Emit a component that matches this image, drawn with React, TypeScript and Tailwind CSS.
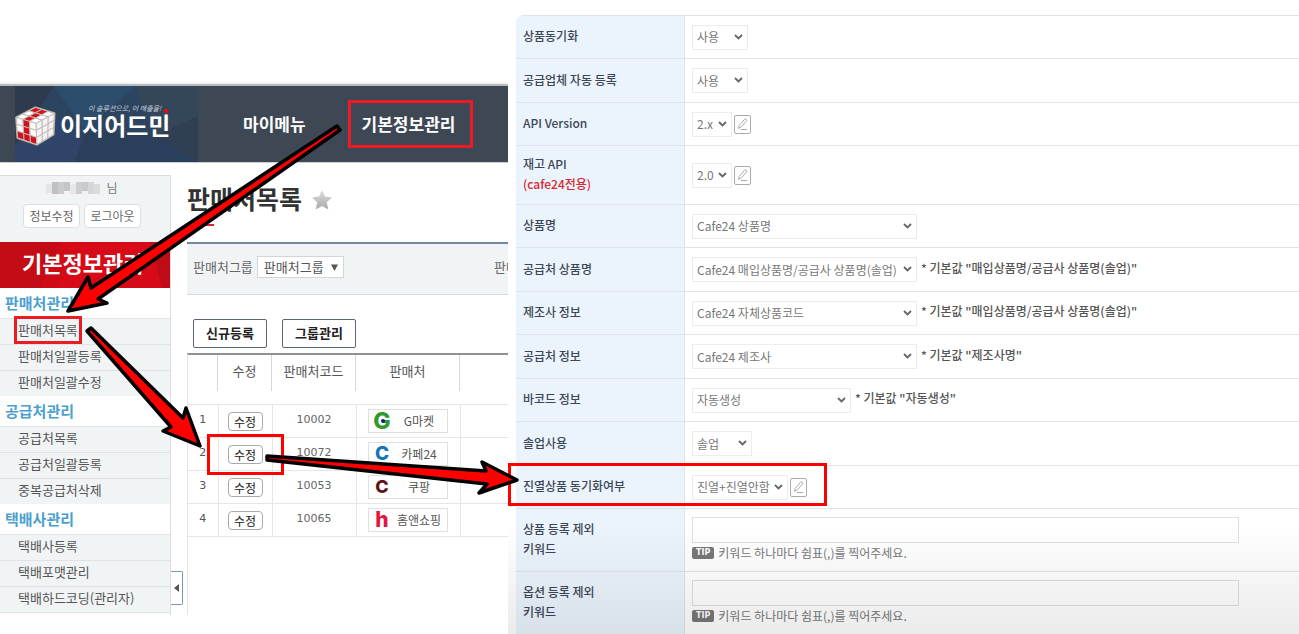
import type { ReactNode } from "react";

const MENU = [
  { title: "판매처관리", items: ["판매처목록", "판매처일괄등록", "판매처일괄수정"] },
  { title: "공급처관리", items: ["공급처목록", "공급처일괄등록", "중복공급처삭제"] },
  { title: "택배사관리", items: ["택배사등록", "택배포맷관리", "택배하드코딩(관리자)"] },
];

const SELLERS = [
  { no: 1, code: "10002", name: "G마켓", mark: "G", markClass: "text-[23px] text-[#2f9a2f]" },
  { no: 2, code: "10072", name: "카페24", mark: "C", markClass: "text-[19px] text-[#1475bd]" },
  { no: 3, code: "10053", name: "쿠팡", mark: "C", markClass: "text-[18px] text-[#5c1416]" },
  { no: 4, code: "10065", name: "홈앤쇼핑", mark: "h", markClass: "text-[21px] text-[#e3173e]" },
];

type Point = [number, number];

const lerp = (a: Point, b: Point, t: number): Point => [a[0] + (b[0] - a[0]) * t, a[1] + (b[1] - a[1]) * t];

// one 3x3 side of the cube, corners given clockwise from the top left
const CubeFace = ({ corners, red, base }: { corners: Point[]; red: string[]; base: string }) => {
  const [a, b, c, d] = corners;
  const at = (u: number, v: number) => lerp(lerp(a, b, u), lerp(d, c, u), v).join(",");
  return (
    <>
      {[0, 1, 2].map((row) =>
        [0, 1, 2].map((col) => (
          <polygon
            key={`${row}${col}`}
            points={[
              at(col / 3, row / 3),
              at((col + 1) / 3, row / 3),
              at((col + 1) / 3, (row + 1) / 3),
              at(col / 3, (row + 1) / 3),
            ].join(" ")}
            fill={red.includes(`${row}${col}`) ? "#d3111d" : base}
            stroke="#c3bab6"
            strokeWidth="3"
          />
        )),
      )}
    </>
  );
};

const Cube = () => (
  <svg viewBox="16 26 124 120" className="h-10 w-[41px] shrink-0" aria-hidden="true">
    <polygon
      points="20,60 78,30 135,48 132,112 82,142 24,122"
      fill="#b9aea9"
      stroke="#b9aea9"
      strokeWidth="7"
      strokeLinejoin="round"
    />
    <CubeFace corners={[[20, 60], [78, 30], [135, 48], [80, 78]]} red={["10", "11", "12", "02"]} base="#ffffff" />
    <CubeFace corners={[[20, 60], [80, 78], [82, 142], [24, 122]]} red={["01", "11", "20", "21", "22"]} base="#fbfbfb" />
    <CubeFace corners={[[80, 78], [135, 48], [132, 112], [82, 142]]} red={[]} base="#f4f2f2" />
  </svg>
);

const TopBar = () => (
  <header className="border-t-2 border-[#f3f3f3]">
    <div className="flex h-[79px] border-b border-t-2 border-b-[#c9cdd2] border-t-[#b9babb] bg-[#3e4855] pl-[15px]">
      <div className="relative flex w-[183px] shrink-0 items-center gap-1 overflow-hidden pt-1">
        <svg viewBox="0 0 183 76" preserveAspectRatio="none" className="absolute inset-0 h-full w-full" aria-hidden="true">
          <rect width="183" height="76" fill="#2c4460" />
          <polygon points="0,0 39,0 0,60" fill="#2e3b4e" />
          <polygon points="39,0 120,0 70,45" fill="#2b4d6b" />
          <polygon points="0,60 30,20 90,76 0,76" fill="#2f4468" />
          <polygon points="120,0 183,0 183,40 140,50" fill="#33465a" />
          <polygon points="70,45 140,50 183,76 60,76" fill="#2a3f5c" />
          <polygon points="140,50 183,30 183,76" fill="#303f53" />
        </svg>
        <div className="relative">
          <Cube />
        </div>
        <div className="relative flex flex-col pb-3 text-white">
          <span className="pl-7 text-[7px] leading-[10px] text-[#c6d0da] italic">이 솔루션으로, 이 매출을!</span>
          <strong className="text-2xl leading-6 font-bold whitespace-nowrap">이지어드민</strong>
          <span className="absolute top-1.5 right-0.5 size-1 rotate-45 bg-[#e0101c]" />
        </div>
      </div>
      <nav className="flex items-center pl-[30px] text-[17px] font-bold text-white">
        <a href="#my" className="w-[120px] shrink-0 pl-[15px]">마이메뉴</a>
        <a href="#basic" className="flex h-12 w-[125px] shrink-0 items-center justify-center border-[3px] border-[#ed1c24] pr-1">
          기본정보관리
        </a>
      </nav>
    </div>
  </header>
);

const MOSAIC = ["#e3e6e7", "#bfc2c4", "#c9cbcd", "#c3c5c8", "#e6e9ea", "#cdd0d2", "#c8cacc", "#d5d6d8", "#d9dbdc"];

const Sidebar = () => (
  <aside className="w-[171px] shrink-0 border-t border-r border-[#d8dcdf] pb-0.5">
    <div className="flex h-[66px] flex-col items-center gap-2 bg-[#f1f4f5] pr-1.5 pt-1">
      <p className="flex items-center gap-1.5 text-xs text-[#777]">
        <svg viewBox="0 0 54 12" className="h-3 w-[54px]" aria-hidden="true">
          {MOSAIC.map((color, i) => (
            <rect key={i} x={i * 6} y={i % 4 === 0 ? 2 : 0} width="6" height={i % 3 === 0 ? 9 : 12} fill={color} />
          ))}
        </svg>
        님
      </p>
      <div className="flex gap-1 text-xs text-[#666]">
        <button className="h-6 w-[57px] rounded-sm border border-[#dcdfe1] bg-white">정보수정</button>
        <button className="h-6 w-[57px] rounded-sm border border-[#dcdfe1] bg-white">로그아웃</button>
      </div>
    </div>
    <h2 className="relative h-[46px] bg-[#d70a17] pl-[22px] text-[22px] leading-10 font-bold text-white">
      <svg viewBox="0 0 170 46" preserveAspectRatio="none" className="absolute inset-0 h-full w-full" aria-hidden="true">
        <polygon points="0,0 60,0 40,46 0,46" fill="#c40c16" />
        <polygon points="60,0 78,18 54,46 40,46" fill="#cf0b16" />
        <polygon points="150,0 170,0 170,46 162,46" fill="#c00c16" />
      </svg>
      <span className="relative">기본정보관리</span>
    </h2>
    <nav>
      {MENU.map((group) => (
        <section key={group.title}>
          <h3 className="h-[30px] pl-[5px] text-[15px] leading-[30px] font-bold text-[#4b9fd0]">{group.title}</h3>
          <ul className="text-[13px] text-[#555]">
            {group.items.map((item) => (
              <li key={item} className="flex h-[26px] items-center border-t border-[#dfe3e5] bg-[#f1f4f5] pb-[3px] pl-[14px]">
                {item === "판매처목록" ? (
                  <a href="#list" className="-my-1 border-[3px] border-[#ed1c24] px-px leading-[22px]">
                    {item}
                  </a>
                ) : (
                  <a href="#menu" className="pl-1">{item}</a>
                )}
              </li>
            ))}
          </ul>
        </section>
      ))}
      <div className="border-t border-[#dfe3e5]" />
    </nav>
  </aside>
);

const SellerList = () => (
  <main className="flex min-w-0 flex-1 flex-col pt-2">
    <div className="flex items-center gap-2.5">
      <h1 className="text-[25px] leading-[30px] font-bold text-[#333]">판매처목록</h1>
      <svg viewBox="0 0 20 20" className="mt-1 size-5" aria-hidden="true">
        <defs>
          <linearGradient id="star" x2="0" y2="1">
            <stop offset="0" stopColor="#dedede" />
            <stop offset="1" stopColor="#a9a9a9" />
          </linearGradient>
        </defs>
        <path d="M10 0l3 6.600 7 .8-5.200 4.900 1.500 7.100L10 16l-6.300 3.400 1.500-7.100L0 7.400l7-.8z" fill="url(#star)" />
      </svg>
    </div>
    <div className="mt-[11px] h-0.5 w-[27px] bg-[#e02034]" />
    <div className="mt-4 flex h-[53px] items-center gap-1 overflow-hidden border-t-2 border-b border-t-[#7188a5] border-b-[#d5d9dc] bg-[#f1f4f5] pb-1 pl-1.5 text-[13px] text-[#666]">
      <label htmlFor="group" className="shrink-0">판매처그룹</label>
      <span className="relative">
        <select id="group" className="block h-[22px] w-[87px] appearance-none border border-[#d5d5d5] bg-white pl-1.5 text-[13px] leading-5 text-[#555]">
          <option>판매처그룹</option>
        </select>
        <svg viewBox="0 0 7 7" className="pointer-events-none absolute top-2 right-1.5 size-[7px]" aria-hidden="true">
          <path d="M0 .5h7L3.500 7z" fill="#555" />
        </svg>
      </span>
      <span className="ml-auto w-3.5 shrink-0 overflow-hidden whitespace-nowrap">판매</span>
    </div>
    <div className="mt-6 mb-[5px] flex gap-[15px] pl-1.5 text-[13px] font-bold text-[#222]">
      <button className="h-[29px] w-[74px] rounded-xs border border-[#5d6678] bg-white pb-0.5">신규등록</button>
      <button className="h-[29px] w-[74px] rounded-xs border border-[#5d6678] bg-white pb-0.5">그룹관리</button>
    </div>
    <div className="flex-1 border-t-2 border-l border-t-[#8f9191] border-l-[#e4e4e4]">
      <table className="w-full table-fixed border-collapse text-[13px] text-[#555]">
        <colgroup>
          <col className="w-[30px]" />
          <col className="w-[54px]" />
          <col className="w-[84px]" />
          <col className="w-[104px]" />
          <col />
        </colgroup>
        <thead>
          <tr className="h-[49px] align-top">
            {["", "수정", "판매처코드", "판매처"].map((head) => (
              <th key={head} className="p-0 font-normal">
                <div className="h-9 border-r border-[#d6d6d6] leading-8">{head}</div>
              </th>
            ))}
            <th className="p-0" />
          </tr>
        </thead>
        <tbody>
          {SELLERS.map((seller) => (
            <tr key={seller.no} className="h-[33px] border-y border-[#e6e6e6] text-center">
              <td className="border-r border-[#e6e6e6] p-0 font-['DejaVu_Sans',sans-serif] text-[11px]">{seller.no}</td>
              <td className="border-r border-[#e6e6e6] p-0">
                <button className="h-[19px] w-[35px] rounded-sm border border-[#aaa] bg-white align-middle text-xs leading-[17px] text-[#222]">
                  수정
                </button>
              </td>
              <td className="border-r border-[#e6e6e6] p-0 font-['DejaVu_Sans',sans-serif] text-[11px] text-[#666]">
                {seller.code}
              </td>
              <td className="border-r border-[#e6e6e6] p-0">
                <div className="mx-auto flex h-6 w-20 items-center border border-[#e0e0e0] bg-white text-xs">
                  <span className={`relative w-[26px] shrink-0 font-[Inter,sans-serif] leading-5 font-extrabold ${seller.markClass}`}>
                    {seller.mark}
                    {seller.no === 1 && <i className="absolute top-2 left-3 size-1 rounded-full bg-[#16206b]" />}
                  </span>
                  <span className="flex-1 pr-1 whitespace-nowrap">{seller.name}</span>
                </div>
              </td>
              <td className="p-0" />
            </tr>
          ))}
        </tbody>
      </table>
    </div>
  </main>
);

const Choice = ({ id, value, width }: { id: string; value: string; width: string }) => (
  <span className={`relative shrink-0 ${width}`}>
    <select id={id} className="block h-[25px] w-full appearance-none border border-[#ececee] bg-transparent pl-1 text-xs text-[#777]">
      <option>{value}</option>
    </select>
    <svg viewBox="0 0 9 6" className="pointer-events-none absolute top-[9px] right-[5px] h-1.5 w-[9px]" aria-hidden="true">
      <path d="M1 1l3.500 3.500L8 1" fill="none" stroke="#666" strokeWidth="1.800" />
    </svg>
  </span>
);

const EditButton = () => (
  <button aria-label="편집" className="flex h-[19px] w-[17px] shrink-0 items-center justify-center rounded-xs border border-[#aaa]">
    <svg viewBox="0 0 13 14" className="h-3.5 w-[13px]" fill="none" stroke="#aaa" aria-hidden="true">
      <path d="M2.500 11.500l.7-3L9 1.700l2 1.600-5.300 6.300zM5 12.500h6" />
    </svg>
  </button>
);

const Note = ({ children }: { children: ReactNode }) => (
  <span className="pb-1 pl-0.5 text-xs font-medium whitespace-nowrap text-[#555]">* 기본값 "{children}"</span>
);

const Keyword = ({ id }: { id: string }) => (
  <div className="flex-1 pr-[60px]">
    <input id={id} type="text" className="block h-[26px] w-full border border-[#dedee0] bg-transparent px-1 text-xs" />
    <p className="flex items-center gap-1 text-xs leading-5 text-[#777]">
      <span className="rounded-xs bg-[#777] px-1 font-['DejaVu_Sans',sans-serif] text-[8px] leading-3 font-bold text-white">TIP</span>
      키워드 하나마다 쉼표(,)를 찍어주세요.
    </p>
  </div>
);

const Row = ({ id, label, height, children }: { id: string; label: ReactNode; height: string; children: ReactNode }) => (
  <div className={`flex border-t border-[#dfe3e7] ${height}`}>
    <label
      htmlFor={id}
      className="flex w-[169px] shrink-0 flex-col justify-center border-r border-[#dfe3e7] bg-[#ebf4fd] pb-0.5 pl-[7px] text-xs leading-5 font-medium text-[#3c4655]"
    >
      {label}
    </label>
    <div className="flex flex-1 items-center gap-0.5 pl-[7px]">{children}</div>
  </div>
);

const SyncSettings = () => (
  <form className="relative flex-1 pt-[15px] pl-2">
    <div className="overflow-hidden rounded-tl-lg">
      <Row id="sync" label="상품동기화" height="h-[43px]">
        <Choice id="sync" value="사용" width="w-14" />
      </Row>
      <Row id="auto" label="공급업체 자동 등록" height="h-11">
        <Choice id="auto" value="사용" width="w-14" />
      </Row>
      <Row id="version" label="API Version" height="h-[43px]">
        <Choice id="version" value="2.x" width="w-10" />
        <EditButton />
      </Row>
      <Row id="stock" label={<>재고 API<span className="text-[#d8272d]">(cafe24전용)</span></>} height="h-[59px]">
        <Choice id="stock" value="2.0" width="w-10" />
        <EditButton />
      </Row>
      <Row id="product" label="상품명" height="h-[43px]">
        <Choice id="product" value="Cafe24 상품명" width="w-[225px]" />
      </Row>
      <Row id="supplierProduct" label="공급처 상품명" height="h-11">
        <Choice id="supplierProduct" value="Cafe24 매입상품명/공급사 상품명(솔업)" width="w-[225px]" />
        <Note>매입상품명/공급사 상품명(솔업)</Note>
      </Row>
      <Row id="maker" label="제조사 정보" height="h-[43px]">
        <Choice id="maker" value="Cafe24 자체상품코드" width="w-[225px]" />
        <Note>매입상품명/공급사 상품명(솔업)</Note>
      </Row>
      <Row id="supplier" label="공급처 정보" height="h-11">
        <Choice id="supplier" value="Cafe24 제조사" width="w-[225px]" />
        <Note>제조사명</Note>
      </Row>
      <Row id="barcode" label="바코드 정보" height="h-[43px]">
        <Choice id="barcode" value="자동생성" width="w-[159px]" />
        <Note>자동생성</Note>
      </Row>
      <Row id="solup" label="솔업사용" height="h-11">
        <Choice id="solup" value="솔업" width="w-[60px]" />
      </Row>
      <Row id="display" label="진열상품 동기화여부" height="h-[43px]">
        <Choice id="display" value="진열+진열안함" width="w-24" />
        <EditButton />
      </Row>
      <Row id="productKeyword" label={<>상품 등록 제외<span>키워드</span></>} height="h-[63px]">
        <Keyword id="productKeyword" />
      </Row>
      <Row id="optionKeyword" label={<>옵션 등록 제외<span>키워드</span></>} height="h-[63px]">
        <Keyword id="optionKeyword" />
      </Row>
    </div>
    <div className="pointer-events-none absolute inset-x-0 bottom-0 h-[110px] bg-linear-to-b from-transparent to-black/8" />
  </form>
);

// callouts that walk from the top menu down to the sync setting
const Callouts = () => (
  <svg width="840" height="520" className="pointer-events-none absolute top-0 left-0" aria-hidden="true">
    <g fill="none" stroke="#ff0000" strokeWidth="3">
      <rect x="208.500" y="435.500" width="74" height="38" />
      <rect x="509.500" y="464.500" width="316" height="40" />
    </g>
    <g fill="#ff0000" stroke="#000" strokeWidth="3.500" strokeLinejoin="round">
      <path d="M337 126L91 288L88 277L68 311L107 303L98 299L340 130z" />
      <path d="M87 331L171 427L163 431L200 446L186 408L183 418L91 328z" />
      <path d="M267 456L486 471L482 462L517 480L479 493L487 484L267 460z" />
    </g>
  </svg>
);

const App = () => {
  return (
    <div className="relative flex min-h-screen overflow-hidden bg-white font-['Noto_Sans_CJK_KR',sans-serif]">
      <div className="w-[508px] shrink-0 overflow-hidden pt-[82px]">
        <TopBar />
        <div className="mt-3 flex">
          <Sidebar />
          <button aria-label="메뉴 접기" className="mr-1 mb-2.5 flex h-[34px] w-3 items-center justify-center self-end rounded-r-xs border border-l-0 border-[#7d95ac] bg-white">
            <svg viewBox="0 0 5 8" className="h-2 w-[5px]" aria-hidden="true">
              <path d="M5 0v8L0 4z" fill="#555" />
            </svg>
          </button>
          <SellerList />
        </div>
      </div>
      <SyncSettings />
      <Callouts />
    </div>
  );
};

export default App;
